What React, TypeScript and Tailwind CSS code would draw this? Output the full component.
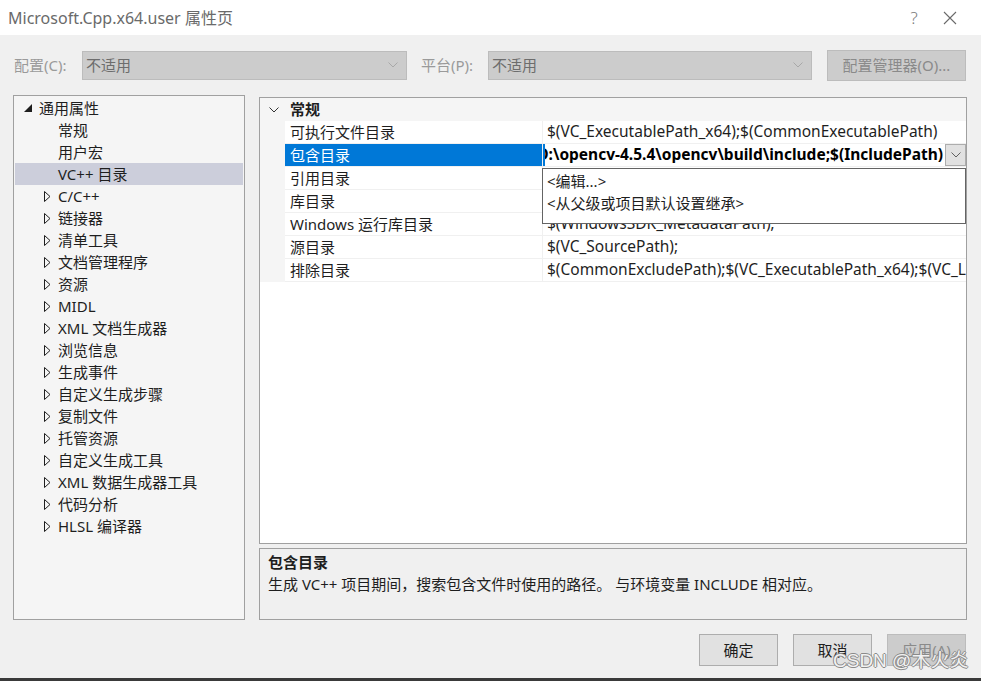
import React from 'react';

const font = "font-['Noto_Sans','Noto_Sans_CJK_SC',sans-serif]";

type TreeItem = { label: string; level: 0 | 1; kind: 'open' | 'closed' | 'leaf'; selected?: boolean };

const tree: TreeItem[] = [
  { label: '通用属性', level: 0, kind: 'open' },
  { label: '常规', level: 1, kind: 'leaf' },
  { label: '用户宏', level: 1, kind: 'leaf' },
  { label: 'VC++ 目录', level: 1, kind: 'leaf', selected: true },
  { label: 'C/C++', level: 1, kind: 'closed' },
  { label: '链接器', level: 1, kind: 'closed' },
  { label: '清单工具', level: 1, kind: 'closed' },
  { label: '文档管理程序', level: 1, kind: 'closed' },
  { label: '资源', level: 1, kind: 'closed' },
  { label: 'MIDL', level: 1, kind: 'closed' },
  { label: 'XML 文档生成器', level: 1, kind: 'closed' },
  { label: '浏览信息', level: 1, kind: 'closed' },
  { label: '生成事件', level: 1, kind: 'closed' },
  { label: '自定义生成步骤', level: 1, kind: 'closed' },
  { label: '复制文件', level: 1, kind: 'closed' },
  { label: '托管资源', level: 1, kind: 'closed' },
  { label: '自定义生成工具', level: 1, kind: 'closed' },
  { label: 'XML 数据生成器工具', level: 1, kind: 'closed' },
  { label: '代码分析', level: 1, kind: 'closed' },
  { label: 'HLSL 编译器', level: 1, kind: 'closed' },
];

const rows = [
  { name: '可执行文件目录', value: '$(VC_ExecutablePath_x64);$(CommonExecutablePath)' },
  { name: '包含目录', value: 'D:\\opencv-4.5.4\\opencv\\build\\include;$(IncludePath)', editing: true },
  { name: '引用目录', value: '' },
  { name: '库目录', value: '' },
  { name: 'Windows 运行库目录', value: '$(WindowsSDK_MetadataPath);' },
  { name: '源目录', value: '$(VC_SourcePath);' },
  { name: '排除目录', value: '$(CommonExcludePath);$(VC_ExecutablePath_x64);$(VC_LibraryPath_x64)' },
];

function Chevron({ className }: { className?: string }) {
  return (
    <svg width="10" height="6" viewBox="0 0 10 6" className={className}>
      <path d="M0.5 0.5 L5 5 L9.5 0.5" fill="none" stroke="currentColor" strokeWidth="1" />
    </svg>
  );
}

function DisabledSelect({ width }: { width: string }) {
  return (
    <div className={`${width} h-[29px] bg-[#cccccc] border border-[#bcbcbc] flex items-center pl-[3px] pr-[8px] text-[#6d6d6d]`}>
      <span className="flex-1">不适用</span>
      <Chevron className="text-[#a8a8a8]" />
    </div>
  );
}

function TreeRow({ item }: { item: TreeItem }) {
  return (
    <div className={`h-[22px] flex items-center ${item.selected ? 'bg-[#cccedb]' : ''}`}>
      <div className={`${item.level === 0 ? 'w-[24px] pl-[9px]' : 'w-[43px] pl-[29px]'} flex items-center`}>
        {item.kind === 'open' && (
          <svg width="8" height="8" viewBox="0 0 8 8">
            <polygon points="8,0 8,8 0,8" fill="#1e1e1e" />
          </svg>
        )}
        {item.kind === 'closed' && (
          <svg width="7" height="11" viewBox="0 0 7 11">
            <polygon points="0.5,0.5 6,5.5 0.5,10.5" fill="none" stroke="#1e1e1e" strokeWidth="1" />
          </svg>
        )}
      </div>
      <span className="text-[#1e1e1e] whitespace-nowrap">{item.label}</span>
    </div>
  );
}

export default function App() {
  return (
    <div className={`w-[981px] h-[681px] bg-[#f0f0f0] flex flex-col text-[15px] leading-none ${font} relative overflow-hidden`}>
      {/* title bar */}
      <div className="h-[35px] bg-white flex items-center pl-[8px] text-[#6a6a6a] text-[16px]">
        <span className="flex-1">Microsoft.Cpp.x64.user 属性页</span>
        <span className="w-[20px] text-center text-[17px] font-light text-[#7a7a7a]">?</span>
        <span className="w-[57px] flex justify-center pr-[6px]">
          <svg width="14" height="14" viewBox="0 0 14 14">
            <path d="M1 1 L13 13 M13 1 L1 13" stroke="#6a6a6a" strokeWidth="1.1" />
          </svg>
        </span>
      </div>

      {/* config row */}
      <div className="h-[60px] flex items-center pl-[14px]">
        <span className="w-[68px] text-[#9a9a9a]">配置(C):</span>
        <DisabledSelect width="w-[325px]" />
        <span className="ml-[14px] w-[67px] text-[#9a9a9a]">平台(P):</span>
        <DisabledSelect width="w-[324px]" />
        <div className="ml-[15px] w-[139px] h-[31px] bg-[#cccccc] border border-[#bcbcbc] flex items-center justify-center text-[#8a8a8a]">
          配置管理器(O)...
        </div>
      </div>

      {/* main */}
      <div className="flex pl-[13px] gap-[14px]">
        <div className="w-[232px] h-[525px] shrink-0 bg-[#f5f5f5] border border-[#a0a0a0] pt-[1px] px-[1px]">
          {tree.map((it) => (
            <TreeRow key={it.label} item={it} />
          ))}
        </div>

        <div className="w-[708px] shrink-0 flex flex-col mt-[2px]">
          {/* property grid */}
          <div className="h-[447px] bg-white border border-[#a0a0a0] relative overflow-hidden">
            <div className="h-[23px] bg-[#f5f5f5] flex items-center">
              <div className="w-[26px] flex justify-center pl-[1px]">
                <Chevron className="text-[#333333]" />
              </div>
              <span className="font-bold text-[#1e1e1e] ml-[4px]">常规</span>
            </div>
            <div className="flex">
              <div className="w-[25px] shrink-0 bg-[#f5f5f5]" />
              <div className="flex-1 min-w-0 flex flex-col">
                {rows.map((r) => (
                  <div key={r.name} className="h-[23px] flex border-b border-[#f0f0f0]">
                    <div
                      className={`w-[258px] shrink-0 flex items-center pl-[5px] border-r border-[#f0f0f0] whitespace-nowrap ${
                        r.editing ? 'bg-[#0078d7] text-white' : 'text-[#1e1e1e]'
                      }`}
                    >
                      {r.name}
                    </div>
                    {r.editing ? (
                      <div className="flex-1 min-w-0 flex items-center">
                        <div className="w-[2px] h-full bg-[#0078d7] shrink-0" />
                        <div className="flex-1 min-w-0 overflow-hidden flex justify-end pr-[2px]">
                          <span className="font-bold text-black text-[15.5px] whitespace-nowrap shrink-0">{r.value}</span>
                        </div>
                        <div className="w-[21px] h-[22px] bg-[#e1e1e1] border border-[#adadad] flex items-center justify-center shrink-0">
                          <Chevron className="text-[#606060]" />
                        </div>
                      </div>
                    ) : (
                      <div className="flex-1 min-w-0 flex items-center pl-[4px] overflow-hidden whitespace-nowrap text-[15.5px] text-[#1e1e1e]">
                        {r.value}
                      </div>
                    )}
                  </div>
                ))}
              </div>
            </div>

            {/* dropdown list */}
            <div className="absolute left-[282px] top-[70px] w-[424px] h-[56px] bg-white border border-[#646464] border-t-dotted pl-[4px] pt-[1px] text-[#1e1e1e]">
              <div className="h-[22px] flex items-center">&lt;编辑...&gt;</div>
              <div className="h-[22px] flex items-center">&lt;从父级或项目默认设置继承&gt;</div>
            </div>
          </div>

          {/* description */}
          <div className="mt-[4px] h-[72px] border border-[#a0a0a0] pl-[8px] pt-[3px]">
            <div className="h-[20px] font-bold text-[#1e1e1e] flex items-center">包含目录</div>
            <div className="h-[24px] text-[#1e1e1e] flex items-center">生成 VC++ 项目期间，搜索包含文件时使用的路径。 与环境变量 INCLUDE 相对应。</div>
          </div>
        </div>
      </div>

      {/* buttons */}
      <div className="flex justify-end gap-[15px] pr-[15px] mt-[14px]">
        <div className="w-[79px] h-[32px] bg-[#e1e1e1] border border-[#adadad] flex items-center justify-center text-[#1e1e1e]">确定</div>
        <div className="w-[79px] h-[32px] bg-[#e1e1e1] border border-[#adadad] flex items-center justify-center text-[#1e1e1e]">取消</div>
        <div className="w-[79px] h-[32px] bg-[#cccccc] border border-[#bcbcbc] flex items-center justify-center text-[#8a8a8a]">应用(A)</div>
      </div>

      <div className="absolute left-0 right-0 bottom-0 h-[3px] bg-[#3a3a3a]" />

      {/* watermark */}
      <div className="absolute left-[833px] top-[651px] text-[19px] font-['Liberation_Sans','Noto_Sans_CJK_SC',sans-serif] text-[#f2f2f2] [text-shadow:1px_0_0_#8a8a8a,-1px_0_0_#8a8a8a,0_1px_0_#8a8a8a,0_-1px_0_#8a8a8a]">
        CSDN @木火炎
      </div>
    </div>
  );
}
